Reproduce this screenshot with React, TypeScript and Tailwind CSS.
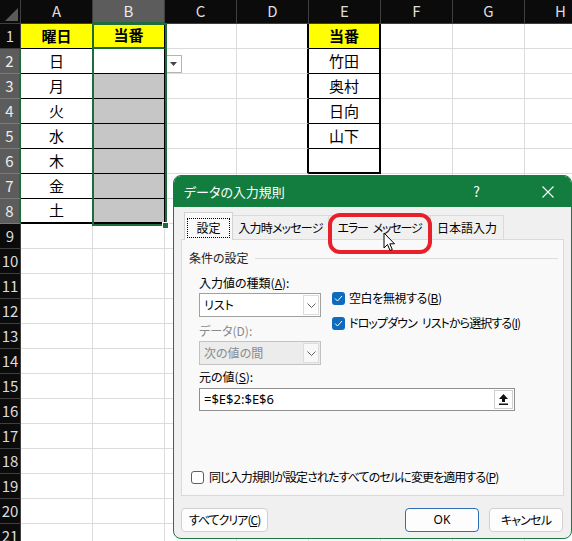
import React from "react";

const colLetters = ["A", "B", "C", "D", "E", "F", "G", "H"];
const weekdays = ["曜日", "日", "月", "火", "水", "木", "金", "土"];
const members = ["当番", "竹田", "奥村", "日向", "山下", ""];

function cellClass(r: number, c: number) {
	const parts = [
		"relative flex h-full w-[72px] shrink-0 items-center justify-center text-[15px] text-black",
	];

	// borders
	if (c === 0 && r <= 8) {
		parts.push(r === 8 ? "border-r border-b-2 border-black" : "border-r border-b border-black");
	} else if (c === 1 && r === 1) {
		parts.push("border-r border-b-2 border-r-black border-b-[#1e6b3c]");
	} else if (c === 1 && r <= 8) {
		parts.push(r === 8 ? "border-r border-b-2 border-black" : "border-r border-b border-black");
	} else if (c === 3 && r <= 6) {
		parts.push("border-r-2 border-b border-r-black border-b-[#dcdcdc]");
	} else if (c === 4 && r <= 6) {
		parts.push(r === 6 ? "border-r-2 border-b-2 border-black" : "border-r-2 border-b border-black");
	} else {
		parts.push("border-r border-b border-[#dcdcdc]");
	}

	// fill
	if (r === 1 && (c === 0 || c === 1 || c === 4)) {
		parts.push("bg-[#ffff00] font-bold");
	} else if (c === 1 && r >= 3 && r <= 8) {
		parts.push("bg-[#c6c6c6]");
	} else {
		parts.push("bg-white");
	}
	return parts.join(" ");
}

function cellText(r: number, c: number) {
	if (c === 0 && r <= 8) return weekdays[r - 1];
	if (c === 1 && r === 1) return "当番";
	if (c === 4 && r <= 6) return members[r - 1];
	return "";
}

function Chevron() {
	return (
		<svg width="9" height="5" viewBox="0 0 9 5" fill="none">
			<path d="M0.5 0.5 L4.5 4.5 L8.5 0.5" stroke="#606060" strokeWidth="1" />
		</svg>
	);
}

function Check({ checked }: { checked: boolean }) {
	if (!checked) {
		return <span className="h-[13px] w-[13px] shrink-0 rounded-[3px] border border-[#5f5f5f] bg-white" />;
	}
	return (
		<span className="flex h-[13px] w-[13px] shrink-0 items-center justify-center rounded-[3px] bg-[#0f6cbd]">
			<svg width="9" height="7" viewBox="0 0 9 7" fill="none">
				<path d="M1 3.5 L3.5 6 L8 1" stroke="white" strokeWidth="1" />
			</svg>
		</span>
	);
}

// a word gap that palt + negative tracking doesn't swallow
function Gap() {
	return <span className="inline-block w-[5px]"> </span>;
}

function Sheet() {
	return (
		<div className="flex flex-col">
			{/* column headers */}
			<div className="flex h-[24px] shrink-0">
				<div className="relative w-[21px] shrink-0 border-r border-b border-[#3f3f3f] bg-[#0b0b0b]">
					<svg className="absolute right-[2px] bottom-[2px]" width="13" height="13" viewBox="0 0 13 13">
						<polygon points="13,0 13,13 0,13" fill="#5a5a5a" />
					</svg>
				</div>
				{colLetters.map((l) => (
					<div
						key={l}
						className={
							l === "B"
								? "flex w-[72px] shrink-0 items-center justify-center border-r border-b-2 border-r-[#3f3f3f] border-b-[#1e6b3c] bg-[#5c5c5c] text-[15px] text-[#ededed]"
								: "flex w-[72px] shrink-0 items-center justify-center border-r border-b border-[#3f3f3f] bg-[#0b0b0b] text-[15px] text-[#dcdcdc]"
						}
					>
						{l}
					</div>
				))}
			</div>
			{Array.from({ length: 21 }, (_, i) => i + 1).map((r) => (
				<div key={r} className="flex h-[25px] shrink-0">
					<div
						className={
							r >= 2 && r <= 8
								? "flex w-[21px] shrink-0 items-center justify-center border-r-2 border-b border-r-[#1e6b3c] border-b-[#7a7a7a] bg-[#5c5c5c] text-[15px] text-[#ededed]"
								: "flex w-[21px] shrink-0 items-center justify-center border-r border-b border-[#3f3f3f] bg-[#0b0b0b] text-[15px] text-[#dcdcdc]"
						}
					>
						{r}
					</div>
					{colLetters.map((_, c) => (
						<div key={c} className={cellClass(r, c)}>
							{cellText(r, c)}
							{r === 2 && c === 2 && (
								<span className="absolute left-0 top-[6px] flex h-[18px] w-[17px] items-center justify-center border border-[#b4b4b4] bg-white">
									<svg width="7" height="4" viewBox="0 0 7 4">
										<polygon points="0,0 7,0 3.5,4" fill="#444" />
									</svg>
								</span>
							)}
						</div>
					))}
				</div>
			))}
		</div>
	);
}

function Dialog() {
	return (
		<div className="absolute left-[173px] top-[175px] flex h-[364px] w-[399px] flex-col overflow-hidden rounded-[8px] border border-[#1b7a43] bg-[#f0f0f0] text-[12px] text-black [font-feature-settings:'palt']">
			{/* title bar */}
			<div className="flex h-[31px] shrink-0 items-center bg-[#127d3f] pl-[10px] text-white">
				<span className="text-[13px]">データの入力規則</span>
				<span className="ml-auto text-[14px]">?</span>
				<svg className="ml-[62px] mr-[17px]" width="12" height="12" viewBox="0 0 12 12">
					<path d="M0.5 0.5 L11.5 11.5 M11.5 0.5 L0.5 11.5" stroke="white" strokeWidth="1.1" />
				</svg>
			</div>

			<div className="flex flex-1 flex-col px-[7px]">
				{/* tabs */}
				<div className="mt-[5px] flex h-[27px] items-end whitespace-nowrap pl-[3px]">
					<div className="relative z-10 mb-[-1px] flex h-[28px] w-[49px] items-center justify-center border border-b-0 border-[#d2d2d2] bg-[#f9f9f9] px-[2px] pt-[2px]">
						<span className="flex h-[20px] w-full items-center justify-center border border-dotted border-black">設定</span>
					</div>
					<div className="flex h-[24px] w-[96px] items-center justify-center border border-b-0 border-l-0 border-[#dadada] tracking-[-0.8px]">入力時メッセージ</div>
					<div className="flex h-[24px] w-[102px] items-center justify-center border border-b-0 border-l-0 border-[#dadada] tracking-[-1.2px]">
						エラー<Gap />メッセージ
					</div>
					<div className="flex h-[24px] w-[73px] items-center justify-center border border-b-0 border-l-0 border-[#dadada]">日本語入力</div>
				</div>

				{/* panel */}
				<div className="flex h-[257px] flex-col border border-[#dadada] bg-[#f9f9f9] pt-[9px] pb-[9px]">
					<div className="flex h-[18px] items-center pl-[7px]">
						<span className="text-[#222]">条件の設定</span>
						<span className="ml-[6px] mr-[5px] h-px flex-1 bg-[#dcdcdc]" />
					</div>

					<div className="ml-[17px] flex">
						<div className="flex w-[122px] flex-col">
							<div className="mt-[7px] flex h-[18px] items-center whitespace-nowrap">
								入力値の種類(<span className="underline">A</span>):
							</div>
							<div className="mt-px flex h-[24px] items-center border border-[#a0a0a0] bg-white pl-[4px]">
								<span className="flex-1">リスト</span>
								<span className="mr-px flex h-[20px] w-[16px] items-center justify-center border border-[#dcdcdc] bg-white">
									<Chevron />
								</span>
							</div>
							<div className="mt-[5px] flex h-[18px] items-center whitespace-nowrap text-[#8a8a8a]">データ(D):</div>
							<div className="mt-px flex h-[24px] items-center border border-[#c2c2c2] bg-[#ececec] pl-[4px] text-[#8a8a8a]">
								<span className="flex-1">次の値の間</span>
								<span className="mr-px flex h-[20px] w-[16px] items-center justify-center border border-[#dcdcdc] bg-[#f7f7f7]">
									<Chevron />
								</span>
							</div>
						</div>
						<div className="ml-[11px] flex flex-col gap-[7px] pt-[22px]">
							<div className="flex h-[18px] items-center gap-[4px] whitespace-nowrap tracking-[-0.4px]">
								<Check checked />
								<span>
									空白を無視する(<span className="underline">B</span>)
								</span>
							</div>
							<div className="flex h-[18px] items-center gap-[4px] whitespace-nowrap tracking-[-0.9px]">
								<Check checked />
								<span>
									ドロップダウン<Gap />リストから選択する(<span className="underline">I</span>)
								</span>
							</div>
						</div>
					</div>

					<div className="ml-[17px] mt-[3px] flex h-[18px] items-center">
						元の値(<span className="underline">S</span>):
					</div>
					<div className="ml-[17px] mt-[2px] flex h-[23px] w-[316px] items-center border border-[#8f8f8f] bg-white pl-[4px] pr-px">
						<span className="flex-1 font-['Noto_Sans',sans-serif] text-[13px]">=$E$2:$E$6</span>
						<span className="flex h-[19px] w-[19px] items-center justify-center border border-[#cfcfcf] bg-white">
							<svg width="9" height="11" viewBox="0 0 9 11">
								<polygon points="4.5,0 9,5 6,5 6,8 3,8 3,5 0,5" fill="#111" />
								<rect x="0" y="9.5" width="9" height="1.5" fill="#111" />
							</svg>
						</span>
					</div>

					<div className="mt-auto ml-[9px] flex h-[18px] items-center gap-[5px] whitespace-nowrap tracking-[-0.9px]">
						<Check checked={false} />
						<span>
							同じ入力規則が設定されたすべてのセルに変更を適用する(<span className="underline">P</span>)
						</span>
					</div>
				</div>

				{/* buttons */}
				<div className="mt-[12px] flex items-center whitespace-nowrap">
					<button className="flex h-[24px] w-[87px] items-center justify-center rounded-[4px] border border-[#d0d0d0] bg-[#fdfdfd] tracking-[-1px]">
						すべてクリア(<span className="underline">C</span>)
					</button>
					<button className="ml-auto flex h-[24px] w-[74px] items-center justify-center rounded-[4px] border border-[#2f6fb5] bg-[#fdfdfd] font-['Noto_Sans',sans-serif]">
						OK
					</button>
					<button className="ml-[10px] mr-px flex h-[24px] w-[74px] items-center justify-center rounded-[4px] border border-[#d0d0d0] bg-[#fdfdfd] tracking-[-0.8px]">
						キャンセル
					</button>
				</div>
			</div>

			{/* red highlight round the error tab */}
			<div className="pointer-events-none absolute left-[154px] top-[37px] h-[41px] w-[104px] rounded-[12px] border-[4px] border-[#e8202a]" />

			{/* mouse pointer */}
			<svg className="pointer-events-none absolute left-[209px] top-[56px]" width="13" height="20" viewBox="0 0 13 20">
				<path d="M1 1 L1 16 L4.5 12.5 L7 18.5 L9.3 17.5 L6.8 11.8 L11.5 11.8 Z" fill="white" stroke="black" strokeWidth="1" strokeLinejoin="round" />
			</svg>
		</div>
	);
}

export default function App() {
	return (
		<div className="relative h-[541px] w-[572px] overflow-hidden bg-white font-['Noto_Sans_CJK_JP','Noto_Sans',sans-serif]">
			<Sheet />

			{/* selection on column B */}
			<div className="pointer-events-none absolute left-[92px] top-[23px] h-[203px] w-[75px] border-2 border-[#1e6b3c]" />
			<div className="pointer-events-none absolute left-[162px] top-[222px] h-[7px] w-[7px] border border-white bg-[#1e6b3c]" />

			<Dialog />
		</div>
	);
}
